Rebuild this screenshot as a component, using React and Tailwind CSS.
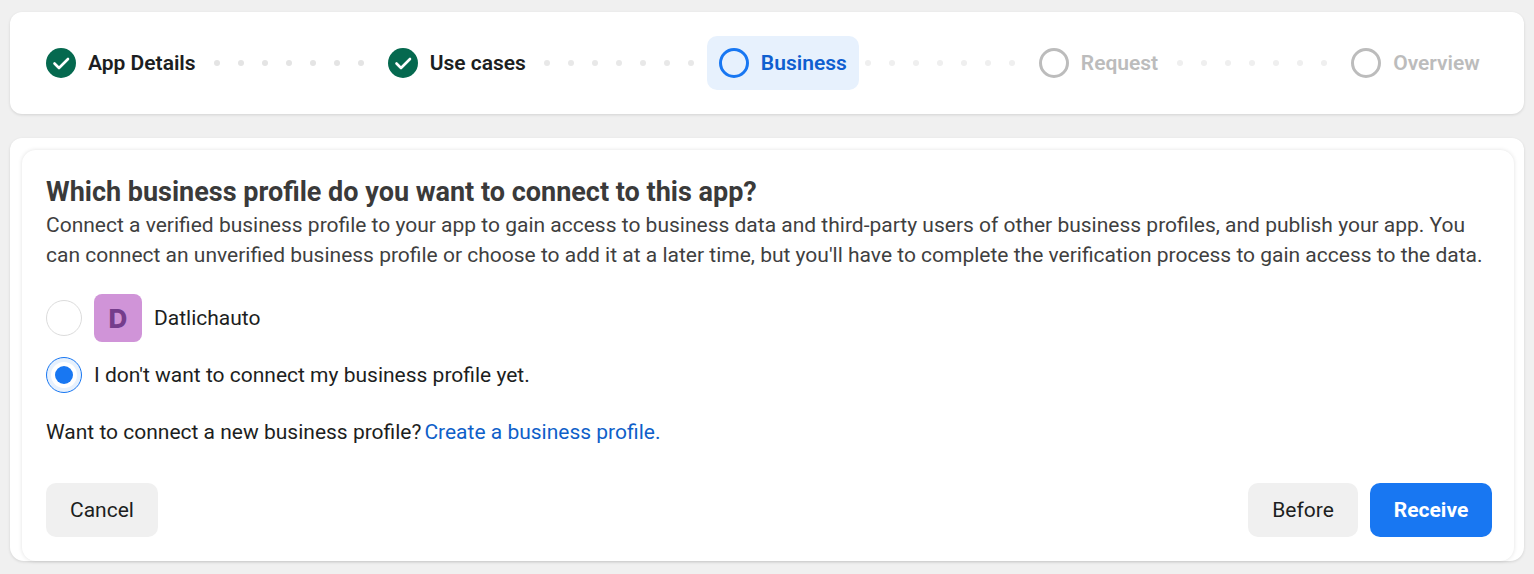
import React from "react";

const Check = () => (
  <svg width="30" height="30" viewBox="0 0 30 30" className="shrink-0">
    <circle cx="15" cy="15" r="15" fill="#05694f" />
    <path d="M8.5 15.5l4.5 4.5 9-9" fill="none" stroke="#fff" strokeWidth="2.6" strokeLinecap="round" strokeLinejoin="round" />
  </svg>
);

const Dots = ({ className = "", color = "bg-[#e4e4e4]" }) => (
  <div className={`flex justify-start gap-[18px] items-center ${className}`}>
    {[0, 1, 2, 3, 4, 5, 6].map((i) => (
      <span key={i} className={`w-1.5 h-1.5 rounded-full ${color}`} />
    ))}
  </div>
);

const Ring = ({ active }) => (
  <span className={`w-[30px] h-[30px] rounded-full border-[3px] shrink-0 ${active ? "border-[#1877f2]" : "border-[#bcbcbc]"}`} />
);

export default function App() {
  return (
    <div className="min-h-[574px] bg-[#f0f0f0] px-2.5 pt-3 text-[#1c1e21] text-[21px] font-['Roboto',sans-serif]">
      <div className="h-[102px] bg-white rounded-[12px] shadow-[0_1px_3px_rgba(0,0,0,0.12)] pl-9 flex items-center font-semibold">
        <div className="flex items-center gap-3"><Check /><span className="pt-0.5">App Details</span></div>
        <Dots className="w-[192px] pl-[18px]" />
        <div className="flex items-center gap-3"><Check /><span className="pt-0.5">Use cases</span></div>
        <Dots className="w-[181px] pl-[18px]" color="bg-[#e8e8e8]" />
        <div className="h-[54px] rounded-[10px] bg-[#e7f1fd] px-3 flex items-center gap-3 text-[#0f5fd0]"><Ring active /><span className="pt-0.5">Business</span></div>
        <Dots className="w-[180px] pl-1.5" color="bg-[#efefef]" />
        <div className="flex items-center gap-3 text-[#bcbcbc]"><Ring /><span className="pt-0.5">Request</span></div>
        <Dots className="w-[193px] pl-[19px]" color="bg-[#efefef]" />
        <div className="flex items-center gap-3 text-[#bcbcbc]"><Ring /><span className="pt-0.5">Overview</span></div>
      </div>

      <div className="mt-6 h-[423px] bg-white rounded-t-[12px] rounded-b-[14px] shadow-[0_1px_3px_rgba(0,0,0,0.12)] pt-3 pl-3 pr-2.5 flex flex-col">
        <div className="flex-1 bg-white rounded-[14px] shadow-[0_0_4px_rgba(0,0,0,0.12)] pl-6 pr-[22px] pt-[26px] flex flex-col">
          <h1 className="text-[27px] leading-[32px] font-bold text-[#3a3a3a]">Which business profile do you want to connect to this app?</h1>
          <p className="mt-[2px] leading-[30px] text-[#3f3f3f] whitespace-nowrap">
            Connect a verified business profile to your app to gain access to business data and third-party users of other business profiles, and publish your app. You<br />
            can connect an unverified business profile or choose to add it at a later time, but you'll have to complete the verification process to gain access to the data.
          </p>
          <div className="mt-6 h-12 flex items-center">
            <span className="w-9 h-9 rounded-full border border-[#dcdcdc] shrink-0" />
            <span className="ml-3 w-12 h-12 rounded-[8px] bg-[#d094d8] flex items-center justify-center text-[#753d8c] font-extrabold text-[26px] font-['Inter',sans-serif]">D</span>
            <span className="ml-3 pt-0.5">Datlichauto</span>
          </div>
          <div className="mt-[15px] h-9 flex items-center">
            <span className="w-9 h-9 rounded-full border border-[#1877f2] bg-[#e7f1fd] flex items-center justify-center shrink-0">
              <span className="w-[26px] h-[26px] rounded-full bg-white flex items-center justify-center">
                <span className="w-[18px] h-[18px] rounded-full bg-[#1877f2]" />
              </span>
            </span>
            <span className="ml-3 pt-0.5">I don't want to connect my business profile yet.</span>
          </div>
          <p className="mt-[27px] leading-[24px]">
            Want to connect a new business profile?<a className="ml-[3px] text-[#0f5fc9]">Create a business profile.</a>
          </p>
          <div className="mt-[39px] flex justify-between">
            <button className="h-[54px] w-[112px] pt-0.5 rounded-[10px] bg-[#f0f0f0]">Cancel</button>
            <div className="flex gap-3">
              <button className="h-[54px] w-[110px] pt-0.5 rounded-[10px] bg-[#f0f0f0]">Before</button>
              <button className="h-[54px] w-[122px] pt-0.5 rounded-[10px] bg-[#1877f2] text-white font-bold">Receive</button>
            </div>
          </div>
        </div>
      </div>
    </div>
  );
}
